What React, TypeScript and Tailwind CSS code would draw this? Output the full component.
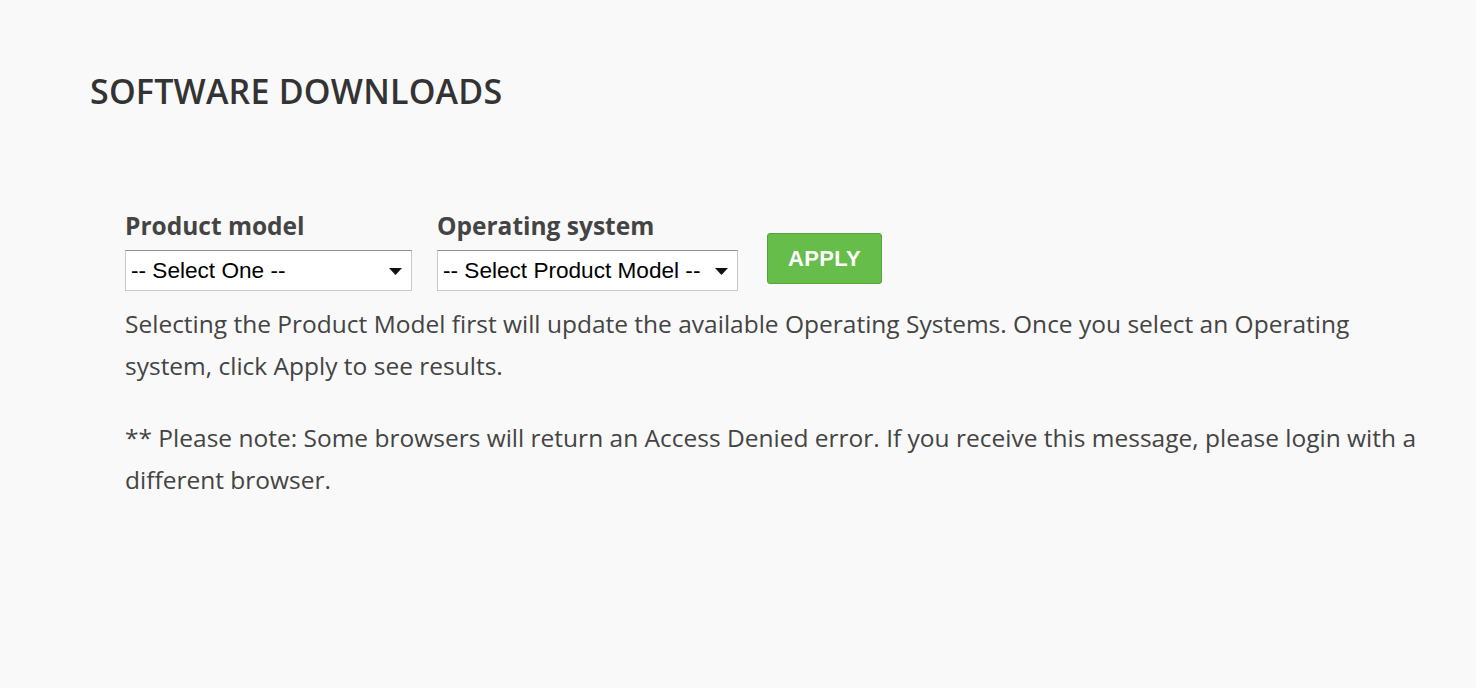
import { useState } from "react";

const sans = { fontFamily: '"Open Sans", "Liberation Sans", sans-serif' };

const SelectBox = ({ width, options }: { width: string; options: string[] }) => {
    const [value, setValue] = useState(options[0]);
    return (
        <div className={`relative ${width} h-[41px]`}>
            <select
                value={value}
                onChange={(e) => setValue(e.target.value)}
                className="w-full h-full appearance-none bg-white border border-[#c8c8c8] border-t-[#8f8f8f] pl-[5px] pr-8 pt-[1px] text-[22.6px] text-black font-['Liberation_Sans',Arial,sans-serif] outline-none rounded-none"
            >
                {options.map((o) => (
                    <option key={o}>{o}</option>
                ))}
            </select>
            <svg className="absolute right-[10px] top-[18px] pointer-events-none" width="13" height="7" viewBox="0 0 13 7">
                <path d="M0 0 L13 0 L6.5 7 Z" fill="#111" />
            </svg>
        </div>
    );
};

export default function App() {
    return (
        <div className="min-h-[688px] w-full bg-[#f9f9f9] text-[#444]" style={sans}>
            <div className="pl-[90px] pt-[70px]">
                {/* Page title */}
                <h1 className="text-[34px] leading-[42px] font-semibold text-[#333] tracking-[0.2px]">
                    SOFTWARE DOWNLOADS
                </h1>

                <div className="pl-[35px] pt-[98px] w-[1330px]">
                    {/* Filters */}
                    <div className="flex items-start">
                        <div className="flex flex-col mr-[25px]">
                            <label className="text-[24.5px] leading-[32px] font-bold text-[#444] mb-[8px]">Product model</label>
                            <SelectBox width="w-[287px]" options={["-- Select One --"]} />
                        </div>
                        <div className="flex flex-col mr-[29px]">
                            <label className="text-[24.5px] leading-[32px] font-bold text-[#444] mb-[8px]">Operating system</label>
                            <SelectBox width="w-[301px]" options={["-- Select Product Model --"]} />
                        </div>
                        <button className="mt-[23px] w-[115px] h-[51px] rounded-[3px] bg-[#66bd4a] border border-[#55a33c] text-white text-[22px] font-bold font-['Liberation_Sans',Arial,sans-serif] tracking-[0.3px]">
                            APPLY
                        </button>
                    </div>

                    {/* Help text */}
                    <p className="mt-[12px] text-[24.5px] leading-[42px] text-[#444]">
                        Selecting the Product Model first will update the available Operating Systems. Once you select an Operating system, click Apply to see results.
                    </p>
                    <p className="mt-[30px] text-[24.5px] leading-[42px] text-[#444]">
                        ** Please note: Some browsers will return an Access Denied error. If you receive this message, please login with a different browser.
                    </p>
                </div>
            </div>
        </div>
    );
}
